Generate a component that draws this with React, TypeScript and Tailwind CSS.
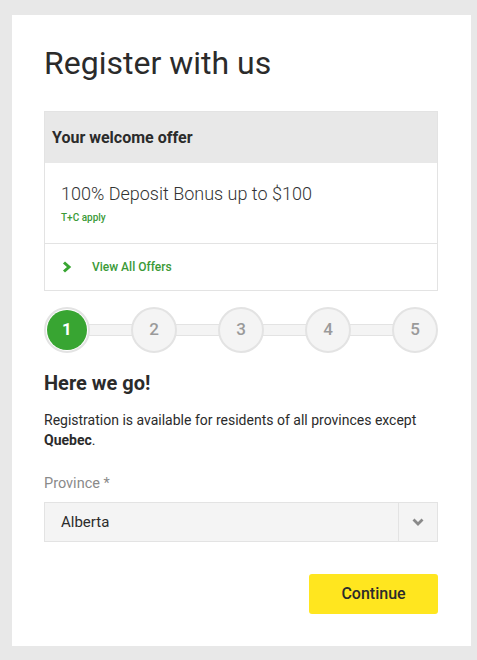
import React from "react";

function Step({ n, active }: { n: number; active?: boolean }) {
  if (active) {
    return (
      <div className="relative z-10 flex h-[46px] w-[46px] shrink-0 items-center justify-center rounded-full border-2 border-[#e3e3e3] bg-white">
        <div className="flex h-[40px] w-[40px] items-center justify-center rounded-full bg-[#38a532] text-[17px] font-bold text-white">
          {n}
        </div>
      </div>
    );
  }
  return (
    <div className="relative z-10 flex h-[46px] w-[46px] shrink-0 items-center justify-center rounded-full border-2 border-[#e3e3e3] bg-[#f4f4f4] text-[17px] font-medium text-[#9a9a9a]">
      {n}
    </div>
  );
}

function Connector() {
  return <div className="-mx-[2px] h-[12px] flex-1 border-y border-[#e3e3e3] bg-[#f4f4f4]" />;
}

export default function App() {
  return (
    <div
      className="min-h-[660px] bg-[#e8e8e8] pl-[12px] pr-[6px] pt-[15px] pb-[14px]"
      style={{ fontFamily: "Roboto, 'Liberation Sans', Arial, sans-serif" }}
    >
      <div className="h-[631px] bg-white pl-[32px] pr-[33px] pt-[28px]">
        <h1 className="text-[32px] leading-[40px] font-normal text-[#2b2b2b]">Register with us</h1>

        <div className="mt-[28px] border border-[#e3e3e3]">
          <div className="flex h-[51px] items-center bg-[#e8e8e8] px-[7px] text-[16px] font-bold text-[#2b2b2b]">
            Your welcome offer
          </div>
          <div className="border-b border-[#e3e3e3] px-[16px] pt-[19px] pb-[19px]">
            <div className="text-[18px] leading-[24px] font-light text-[#333]">
              100% Deposit Bonus up to $100
            </div>
            <div className="mt-[6px] text-[10px] leading-[12px] font-medium text-[#3b9a37]">T+C apply</div>
          </div>
          <div className="flex h-[46px] items-center px-[17px]">
            <svg width="10" height="12" viewBox="0 0 10 12" className="mr-[20px]">
              <path d="M2 1.5 L7 6 L2 10.5" fill="none" stroke="#38a532" strokeWidth="3" strokeLinejoin="miter" />
            </svg>
            <span className="text-[12px] font-medium text-[#3b9a37]">View All Offers</span>
          </div>
        </div>

        <div className="mt-[16px] flex items-center">
          <Step n={1} active />
          <Connector />
          <Step n={2} />
          <Connector />
          <Step n={3} />
          <Connector />
          <Step n={4} />
          <Connector />
          <Step n={5} />
        </div>

        <h2 className="mt-[18px] text-[20px] leading-[24px] font-bold text-[#2b2b2b]">Here we go!</h2>

        <p className="mt-[15px] text-[14px] leading-[20px] text-[#2b2b2b]">
          Registration is available for residents of all provinces except <b className="font-bold">Quebec</b>.
        </p>

        <div className="mt-[24px] text-[14.5px] leading-[20px] text-[#8a8a8a]">Province *</div>

        <div className="mt-[8px] flex h-[40px] items-stretch border border-[#e3e3e3] bg-[#f4f4f4]">
          <div className="flex flex-1 items-center pl-[16px] text-[15px] text-[#2b2b2b]">Alberta</div>
          <div className="flex w-[39px] items-center justify-center border-l border-[#e3e3e3]">
            <svg width="12" height="8" viewBox="0 0 12 8">
              <path d="M1.5 1.5 L6 6 L10.5 1.5" fill="none" stroke="#8a8a8a" strokeWidth="2.8" />
            </svg>
          </div>
        </div>

        <div className="mt-[32px] flex justify-end">
          <button className="h-[40px] w-[129px] rounded-[3px] bg-[#ffe61f] text-[16px] font-medium text-[#2b2b2b]">
            Continue
          </button>
        </div>
      </div>
    </div>
  );
}
